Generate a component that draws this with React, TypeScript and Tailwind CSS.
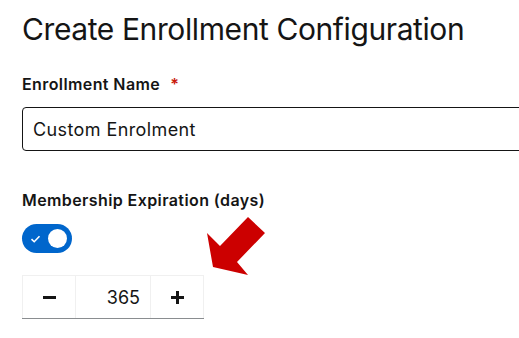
import { useState } from 'react'

function Toggle({ on, onChange }: { on: boolean; onChange: (v: boolean) => void }) {
  return (
    <button
      type="button"
      onClick={() => onChange(!on)}
      className={`relative flex h-[29px] w-[50px] items-center rounded-full ${on ? 'bg-[#0066cc]' : 'bg-[#8a8d90]'}`}
    >
      <svg viewBox="0 0 12 10" className="ml-[8px] h-[8px] w-[11px]">
        <path d="M1 5.2 L4.4 8.4 L11 1.6" fill="none" stroke="#fff" strokeWidth="2" />
      </svg>
      <span className="ml-[7px] h-[19px] w-[19px] rounded-full bg-white" />
    </button>
  )
}

export default function App() {
  const [name, setName] = useState('Custom Enrolment')
  const [on, setOn] = useState(true)
  const [days, setDays] = useState(365)

  return (
    <div
      className="relative h-[338px] w-[519px] overflow-hidden bg-white pl-[22px] pt-[9px] text-[#151515]"
      style={{ fontFamily: 'Inter, sans-serif' }}
    >
      <h1 className="text-[30px] leading-[40px] tracking-[-0.4px]">Create Enrollment Configuration</h1>

      <div className="mt-[25px] flex items-center text-[16px] font-semibold leading-[20px] tracking-[0.4px]">
        Enrollment Name
        <span className="ml-[10px] text-[#c9190b]">*</span>
      </div>

      <input
        value={name}
        onChange={(e) => setName(e.target.value)}
        className="mt-[13px] block h-[44px] w-[510px] rounded-[4px] border-[1.5px] border-[#151515] px-[10px] text-[18px] tracking-[0.4px] outline-none"
      />

      <div className="mt-[39px] text-[16px] font-semibold leading-[20px] tracking-[0.4px]">
        Membership Expiration (days)
      </div>

      <div className="mt-[14px]">
        <Toggle on={on} onChange={setOn} />
      </div>

      <div className="mt-[22px] flex h-[44px] w-[182px] border-b border-[#8a8d90]">
        <button
          type="button"
          onClick={() => setDays(days - 1)}
          className="flex w-[54px] items-center justify-center border border-b-0 border-[#f0f0f0]"
        >
          <span className="h-[3px] w-[13px] bg-[#151515]" />
        </button>
        <input
          value={days}
          onChange={(e) => setDays(Number(e.target.value) || 0)}
          className="w-[74px] border-t border-[#f0f0f0] pr-[10px] text-right text-[18px] text-[#151515] outline-none"
        />
        <button
          type="button"
          onClick={() => setDays(days + 1)}
          className="relative flex w-[54px] items-center justify-center border border-b-0 border-[#f0f0f0]"
        >
          <span className="absolute h-[3px] w-[13px] bg-[#151515]" />
          <span className="absolute h-[13px] w-[3px] bg-[#151515]" />
        </button>
      </div>

      <svg className="absolute left-0 top-0" width="519" height="338" viewBox="0 0 519 338">
        <polygon
          points="248,217 265,233 237,262 248,275 213,267 207,233 220,246"
          fill="#cc0000"
        />
      </svg>
    </div>
  )
}
